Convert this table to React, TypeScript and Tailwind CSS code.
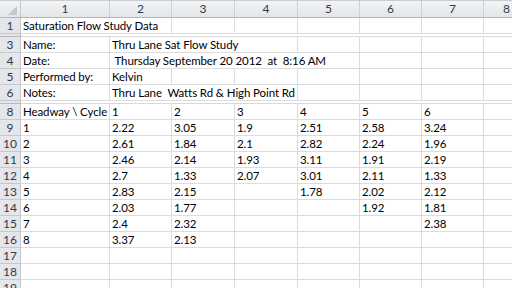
import React from 'react';

type Cell = { text: string; span?: number };

const colWidths = [89, 62, 63, 63, 62, 62, 62, 46];

const rows: { label: string; cells: Cell[]; hidden?: boolean }[] = [
    { label: '1', cells: [{ text: 'Saturation Flow Study Data', span: 2 }, { text: '' }, { text: '' }, { text: '' }, { text: '' }, { text: '' }, { text: '' }] },
    { label: '2', hidden: true, cells: [] },
    { label: '3', cells: [{ text: 'Name:' }, { text: 'Thru Lane Sat Flow Study', span: 3 }, { text: '' }, { text: '' }, { text: '' }, { text: '' }] },
    { label: '4', cells: [{ text: 'Date:' }, { text: '\u00a0Thursday September 20 2012 \u00a0at \u00a08:16 AM', span: 4 }, { text: '' }, { text: '' }, { text: '' }] },
    { label: '5', cells: [{ text: 'Performed by:' }, { text: 'Kelvin' }, { text: '' }, { text: '' }, { text: '' }, { text: '' }, { text: '' }, { text: '' }] },
    { label: '6', cells: [{ text: 'Notes:' }, { text: 'Thru Lane \u00a0Watts Rd & High Point Rd', span: 3 }, { text: '' }, { text: '' }, { text: '' }, { text: '' }] },
    { label: '7', hidden: true, cells: [] },
    { label: '8', cells: ['Headway \\ Cycle', '1', '2', '3', '4', '5', '6', ''].map((t) => ({ text: t })) },
    { label: '9', cells: ['1', '2.22', '3.05', '1.9', '2.51', '2.58', '3.24', ''].map((t) => ({ text: t })) },
    { label: '10', cells: ['2', '2.61', '1.84', '2.1', '2.82', '2.24', '1.96', ''].map((t) => ({ text: t })) },
    { label: '11', cells: ['3', '2.46', '2.14', '1.93', '3.11', '1.91', '2.19', ''].map((t) => ({ text: t })) },
    { label: '12', cells: ['4', '2.7', '1.33', '2.07', '3.01', '2.11', '1.33', ''].map((t) => ({ text: t })) },
    { label: '13', cells: ['5', '2.83', '2.15', '', '1.78', '2.02', '2.12', ''].map((t) => ({ text: t })) },
    { label: '14', cells: ['6', '2.03', '1.77', '', '', '1.92', '1.81', ''].map((t) => ({ text: t })) },
    { label: '15', cells: ['7', '2.4', '2.32', '', '', '', '2.38', ''].map((t) => ({ text: t })) },
    { label: '16', cells: ['8', '3.37', '2.13', '', '', '', '', ''].map((t) => ({ text: t })) },
    { label: '17', cells: Array.from({ length: 8 }, () => ({ text: '' })) },
    { label: '18', cells: Array.from({ length: 8 }, () => ({ text: '' })) },
    { label: '19', cells: Array.from({ length: 8 }, () => ({ text: '' })) },
];

function SheetRow({ label, cells, hidden }: { label: string; cells: Cell[]; hidden?: boolean }) {
    if (hidden) {
        return (
            <div className="flex h-[3px]">
                <div className="w-[21px] shrink-0 bg-[#e4e6e9] border-r border-b border-[#b7bcc4]" />
                <div className="flex-1 border-b border-[#d8d8d8]" />
            </div>
        );
    }
    let col = 0;
    return (
        <div className="flex h-[16px]">
            <div className="w-[21px] shrink-0 bg-[#e4e6e9] border-r border-b border-[#c5c9cf] text-[#2e3b4e] text-[12px] leading-[16px] text-center">
                {label}
            </div>
            {cells.map((c, i) => {
                const span = c.span ?? 1;
                const w = colWidths.slice(col, col + span).reduce((a, b) => a + b, 0);
                col += span;
                return (
                    <div
                        key={i}
                        className="shrink-0 border-r border-b border-[#dadcdd] pl-[2px] text-[11.5px] tracking-[-0.1px] leading-[16px] text-black whitespace-nowrap overflow-hidden"
                        style={{ width: w }}
                    >
                        {c.text}
                    </div>
                );
            })}
        </div>
    );
}

export default function App() {
    return (
        <div className="w-[512px] h-[288px] overflow-hidden bg-white font-['Lato','Liberation_Sans',sans-serif]">
            <div className="flex h-[18px] border-t border-[#c9ccd1] bg-gradient-to-b from-[#f3f4f5] to-[#e3e5e8] border-b border-b-[#b2b7bf]">
                <div className="relative w-[21px] shrink-0 border-r border-[#c5c9cf]">
                    <div className="absolute right-[3px] bottom-[2px] w-0 h-0 border-l-[9px] border-l-transparent border-b-[9px] border-b-[#c4c7cc]" />
                </div>
                {colWidths.map((w, i) => (
                    <div
                        key={i}
                        className="shrink-0 border-r border-[#cdd1d6] text-center text-[12px] leading-[16px] text-[#2e3b4e]"
                        style={{ width: w }}
                    >
                        {i + 1}
                    </div>
                ))}
            </div>
            {rows.map((r) => (
                <SheetRow key={r.label} {...r} />
            ))}
        </div>
    );
}
